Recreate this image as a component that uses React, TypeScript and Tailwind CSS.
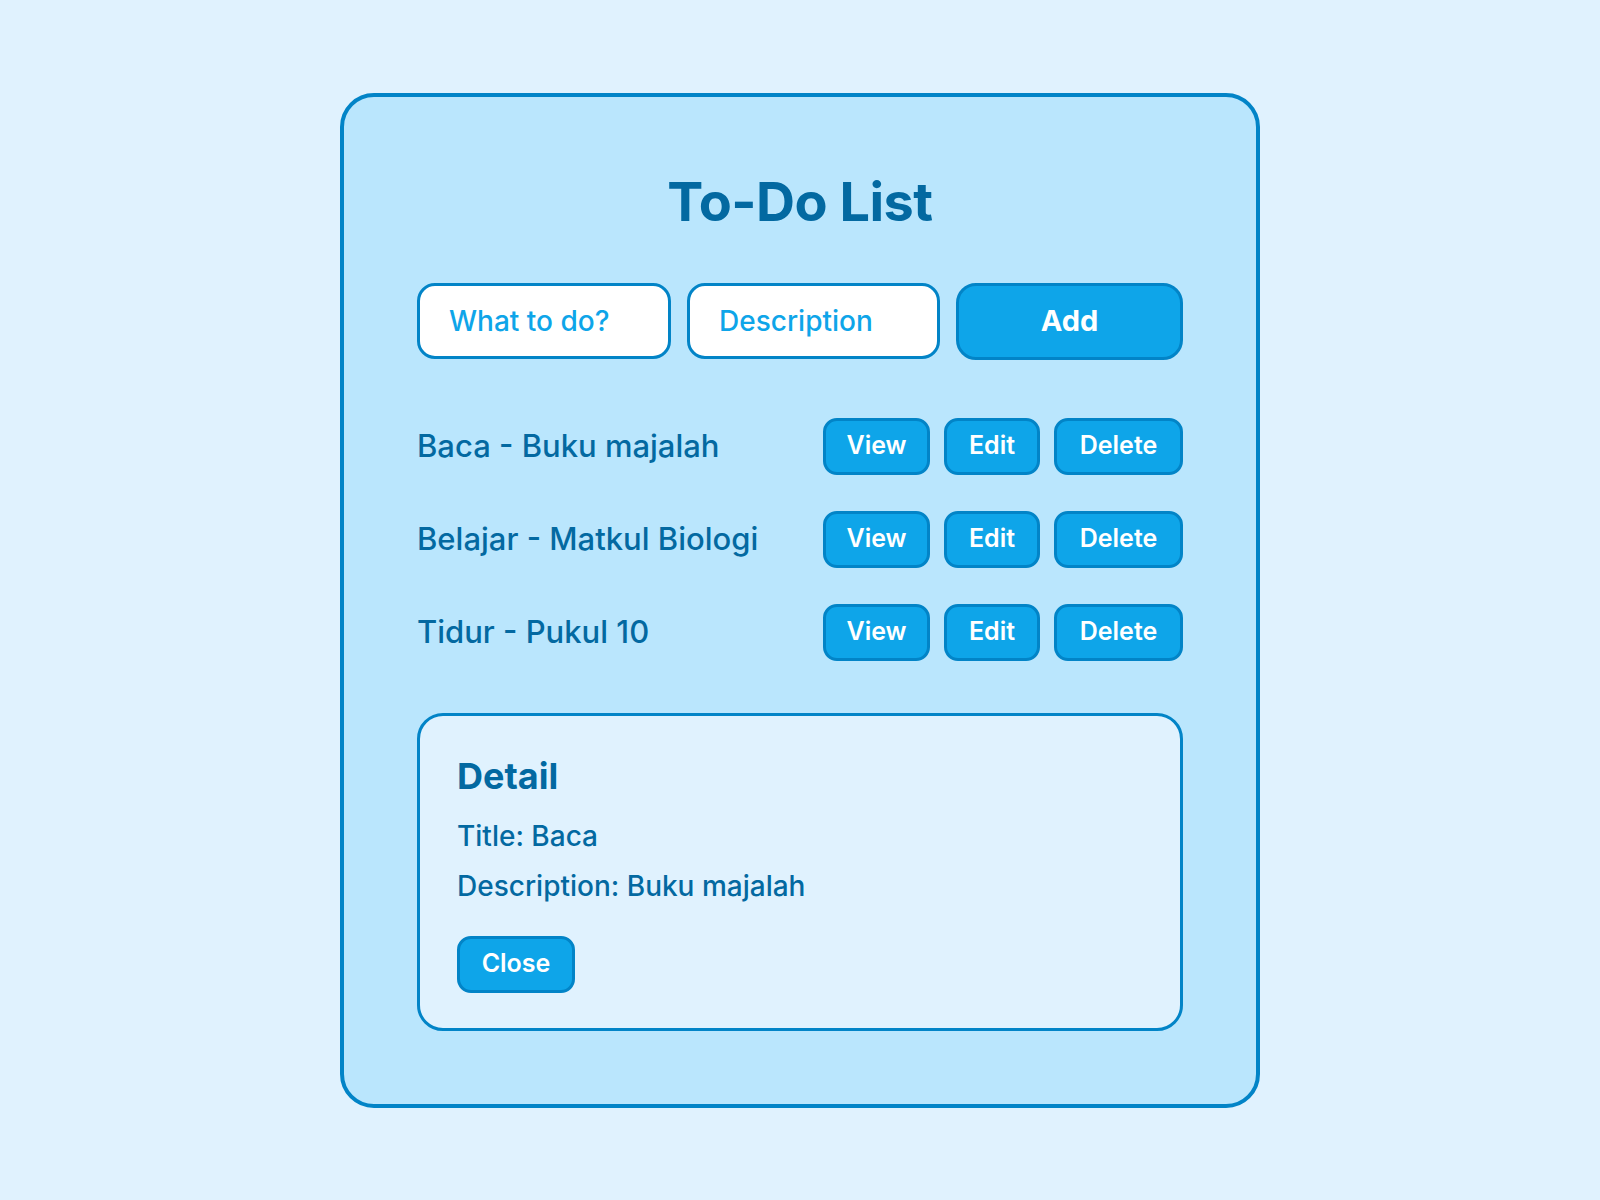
import React from "react";

const items = [
  { title: "Baca", desc: "Buku majalah" },
  { title: "Belajar", desc: "Matkul Biologi" },
  { title: "Tidur", desc: "Pukul 10" },
];

const btn =
  "h-[57px] rounded-[14px] border-[3px] border-[#0284c7] bg-[#0ea5e9] text-white font-semibold text-[25px] flex items-center justify-center";

export default function App() {
  return (
    <div
      className="min-h-screen w-full bg-[#e0f2fe] flex items-center justify-center"
      style={{ fontFamily: "Inter, 'Noto Sans', sans-serif" }}
    >
      <div className="w-[920px] rounded-[34px] border-4 border-[#0284c7] bg-[#bae6fd] px-[73px] pt-[73px] pb-[73px]">
        <h1 className="text-center text-[54px] leading-[64px] font-bold text-[#0369a1] tracking-[-0.5px]">
          To-Do List
        </h1>

        <div className="mt-[49px] flex gap-[16px]">
          <input
            placeholder="What to do?"
            className="h-[76px] w-[254px] rounded-[18px] border-[3px] border-[#0284c7] bg-white pl-[29px] text-[28px] font-medium text-[#0369a1] placeholder:text-[#0ea5e9] outline-none"
          />
          <input
            placeholder="Description"
            className="h-[76px] w-[253px] rounded-[18px] border-[3px] border-[#0284c7] bg-white pl-[29px] text-[28px] font-medium text-[#0369a1] placeholder:text-[#0ea5e9] outline-none"
          />
          <button className="h-[77px] flex-1 rounded-[20px] border-[3px] border-[#0284c7] bg-[#0ea5e9] text-white text-[29px] font-bold">
            Add
          </button>
        </div>

        <div className="mt-[58px] flex flex-col gap-[36px]">
          {items.map((it) => (
            <div key={it.title} className="flex items-center">
              <div className="flex-1 text-[31px] font-medium text-[#0369a1]">
                {it.title} - {it.desc}
              </div>
              <div className="flex gap-[14px]">
                <button className={`${btn} w-[107px]`}>View</button>
                <button className={`${btn} w-[96px]`}>Edit</button>
                <button className={`${btn} w-[129px]`}>Delete</button>
              </div>
            </div>
          ))}
        </div>

        <div className="mt-[52px] rounded-[26px] border-[3px] border-[#0284c7] bg-[#e0f2fe] px-[37px] pt-[39px] pb-[35px]">
          <h2 className="text-[36px] leading-[43px] font-bold text-[#0369a1]">Detail</h2>
          <p className="mt-[18px] text-[28px] leading-[40px] font-medium text-[#0369a1]">Title: Baca</p>
          <p className="mt-[10px] text-[28px] leading-[40px] font-medium text-[#0369a1]">
            Description: Buku majalah
          </p>
          <button className={`${btn} mt-[30px] w-[118px]`}>Close</button>
        </div>
      </div>
    </div>
  );
}
